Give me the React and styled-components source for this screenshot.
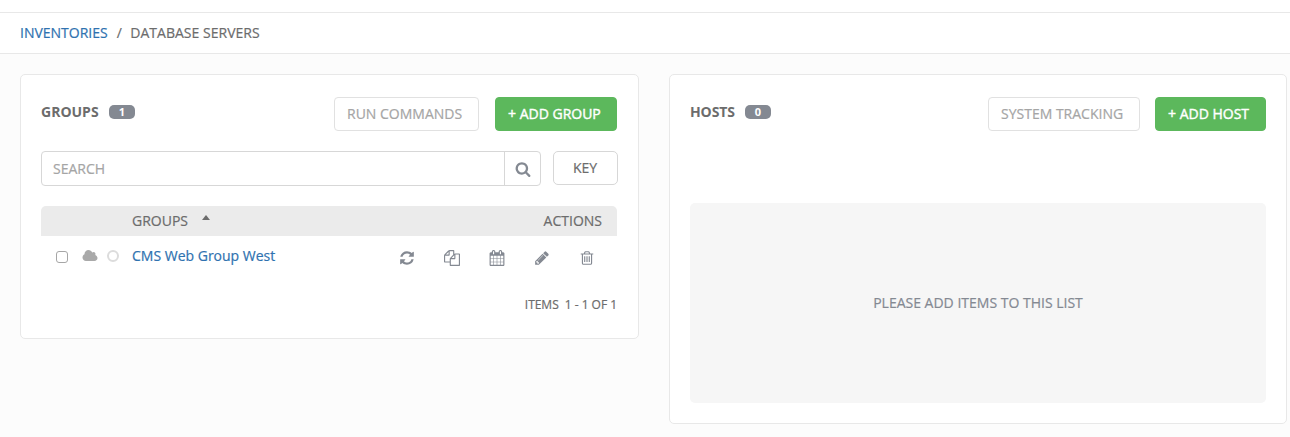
import React from "react";
import styled, { createGlobalStyle } from "styled-components";

const GlobalStyle = createGlobalStyle`
  *, *::before, *::after { box-sizing: border-box; }
  body {
    margin: 0;
    background: #fcfcfc;
    color: #6c6c6c;
    font: 14px/20px "Open Sans", sans-serif;
    -webkit-text-stroke: 0.2px currentColor;
    overflow: hidden;
  }
`;

const TopStrip = styled.div`
  height: 12px;
  background: #fff;
`;

const Breadcrumb = styled.nav`
  display: flex;
  align-items: center;
  height: 42px;
  padding: 0 20px 1px;
  background: #fff;
  border-top: 1px solid #e8e8e8;
  border-bottom: 1px solid #e8e8e8;
`;

const Current = styled.span`
  letter-spacing: 0.02px;
`;

const Link = styled.a`
  color: #2f72b0;
  text-decoration: none;
`;

const Separator = styled.span`
  width: 22.5px;
  padding-left: 9px;
`;

const Panels = styled.main`
  display: grid;
  grid-template-columns: 619px 618px;
  align-items: start;
  gap: 30px;
  padding: 20px;
`;

const Panel = styled.section`
  height: ${(p) => p.$height}px;
  padding: 22px ${(p) => p.$right || 20}px 20px 20px;
  background: #fff;
  border: 1px solid #e8e8e8;
  border-radius: 5px;
`;

const PanelHeader = styled.header`
  display: flex;
  height: 34px;
  margin-bottom: ${(p) => p.$gap}px;
`;

const Title = styled.h2`
  margin: 5px 0 0;
  font-size: 14px;
  line-height: 20px;
  font-weight: 700;
  width: ${(p) => p.$width}px;
  letter-spacing: ${(p) => p.$tracking}px;
  white-space: nowrap;
  -webkit-text-stroke: 0;
`;

const Badge = styled.span`
  width: 26px;
  height: 14px;
  margin-top: 8px;
  border-radius: 5px;
  background: #848992;
  color: #fff;
  font-size: 11px;
  line-height: 14px;
  font-weight: 700;
  text-align: center;
  -webkit-text-stroke: 0;
`;

const HeaderButtons = styled.div`
  display: flex;
  gap: ${(p) => p.$gap}px;
  margin-left: auto;
`;

const Button = styled.button`
  width: ${(p) => p.$width}px;
  height: 34px;
  padding: 0 0 0 12px;
  border: 1px solid #e1e1e1;
  border-radius: 4px;
  background: #fff;
  color: #a5a5a5;
  font: 14px/20px "Open Sans", sans-serif;
  text-align: left;
  white-space: nowrap;
  -webkit-text-stroke: 0.2px currentColor;
`;

const AddButton = styled(Button)`
  border-color: #5cb85c;
  background: #5cb85c;
  color: #fff;
  -webkit-text-stroke: 0.4px #fff;
`;

const KeyButton = styled(Button)`
  padding-left: 19px;
  border-color: #d7d7d7;
  border-radius: 5px;
  color: #6c6c6c;
`;

const SearchRow = styled.div`
  display: flex;
  gap: 12px;
  width: 577px;
  margin-bottom: 20px;
`;

const SearchBox = styled.div`
  display: flex;
  width: 500px;
  height: 35px;
  border: 1px solid #d7d7d7;
  border-radius: 4px;
`;

const SearchInput = styled.input`
  flex: 1;
  min-width: 0;
  padding: 0 11px;
  border: 0;
  background: transparent;
  font: 14px "Open Sans", sans-serif;
  &::placeholder {
    color: #a5a5a5;
    opacity: 1;
  }
`;

const SearchButton = styled.span`
  display: flex;
  align-items: center;
  justify-content: center;
  width: 36px;
  border-left: 1px solid #d7d7d7;
  color: #848992;
`;

const ListHeader = styled.div`
  display: flex;
  height: 30px;
  padding: 5px 15px 0 91px;
  background: #ebebeb;
  border-radius: 5px 5px 0 0;
`;

const SortArrow = styled.span`
  width: 0;
  height: 0;
  margin: 4px auto 0 13.5px;
  border: solid transparent;
  border-width: 0 4.5px 5px;
  border-bottom-color: #6c6c6c;
`;

const Row = styled.div`
  display: flex;
  align-items: flex-start;
  height: 59px;
`;

const Check = styled.input`
  appearance: none;
  width: 12px;
  height: 12px;
  margin: 15px 14px 0 15px;
  border: 1px solid #a6a6a6;
  border-radius: 3px;
  background: #fff;
`;

const CloudSlot = styled.span`
  display: flex;
  width: 24px;
  padding-top: 13px;
  color: #a9a9a9;
`;

const StatusRing = styled.span`
  width: 12px;
  height: 12px;
  margin: 14px 13px 0 1px;
  border: 2px solid #dcdcdc;
  border-radius: 50%;
`;

const GroupName = styled(Link)`
  padding-top: 10px;
`;

const Actions = styled.div`
  display: flex;
  gap: 29px;
  margin: 14px 22px 0 auto;
  color: #848992;
`;

const Glyph = styled.svg`
  display: block;
  height: ${(p) => p.$size}px;
  fill: currentColor;
`;

const Pagination = styled.div`
  font-size: 12px;
  line-height: 20px;
  text-align: right;
  letter-spacing: -0.03px;
  white-space: pre;
`;

const EmptyList = styled.div`
  display: flex;
  align-items: center;
  justify-content: center;
  height: 200px;
  border-radius: 5px;
  background: #f6f6f6;
  color: #848992;
`;

const paths = {
  search:
    "M1216 832q0-185-131.5-316.5t-316.5-131.5-316.5 131.5-131.5 316.5 131.5 316.5 316.5 131.5 316.5-131.5 131.5-316.5zm512 832q0 52-38 90t-90 38q-54 0-90-38l-343-342q-179 124-399 124-143 0-273.5-55.5t-225-150-150-225-55.5-273.5 55.5-273.5 150-225 225-150 273.5-55.5 273.5 55.5 225 150 150 225 55.5 273.5q0 220-124 399l343 343q37 37 37 90z",
  cloud:
    "M1984 1152q0 159-112.5 271.5t-271.5 112.5h-1088q-185 0-316.5-131.5t-131.5-316.5q0-132 71-241.5t187-163.5q-2-28-2-43 0-212 150-362t362-150q158 0 286.5 88t187.5 230q70-62 166-62 106 0 181 75t75 181q0 75-41 138 129 30 213 134.5t84 239.5z",
  refresh:
    "M1639 1056q0 5-1 7-64 268-268 434.5t-478 166.5q-146 0-282.5-55t-243.5-157l-129 129q-19 19-45 19t-45-19-19-45v-448q0-26 19-45t45-19h448q26 0 45 19t19 45-19 45l-137 137q71 66 161 102t187 36q134 0 250-65t186-179q11-17 53-117 8-23 30-23h192q13 0 22.5 9.5t9.5 22.5zm25-800v448q0 26-19 45t-45 19h-448q-26 0-45-19t-19-45 19-45l138-138q-148-137-349-137-134 0-250 65t-186 179q-11 17-53 117-8 23-30 23h-199q-13 0-22.5-9.5t-9.5-22.5v-7q65-268 270-434.5t480-166.5q146 0 284 55.5t245 156.5l130-129q19-19 45-19t45 19 19 45z",
  copy:
    "M1696 384q40 0 68 28t28 68v1216q0 40-28 68t-68 28h-960q-40 0-68-28t-28-68v-288h-544q-40 0-68-28t-28-68v-672q0-40 20-88t48-76l408-408q28-28 76-48t88-20h416q40 0 68 28t28 68v328q68-40 128-40h416zm-544 213l-299 299h299v-299zm-640-384l-299 299h299v-299zm196 647l316-316v-416h-384v416q0 40-28 68t-68 28h-416v640h512v-256q0-40 20-88t48-76zm956 804v-1152h-384v416q0 40-28 68t-68 28h-416v640h896z",
  calendar:
    "M192 1664h288v-288h-288v288zm352 0h320v-288h-320v288zm-352-352h288v-320h-288v320zm352 0h320v-320h-320v320zm-352-384h288v-288h-288v288zm736 736h320v-288h-320v288zm-384-736h320v-288h-320v288zm768 736h288v-288h-288v288zm-384-352h320v-320h-320v320zm-352-864v-288q0-13-9.5-22.5t-22.5-9.5h-64q-13 0-22.5 9.5t-9.5 22.5v288q0 13 9.5 22.5t22.5 9.5h64q13 0 22.5-9.5t9.5-22.5zm736 864h288v-320h-288v320zm-384-384h320v-288h-320v288zm384 0h288v-288h-288v288zm32-480v-288q0-13-9.5-22.5t-22.5-9.5h-64q-13 0-22.5 9.5t-9.5 22.5v288q0 13 9.5 22.5t22.5 9.5h64q13 0 22.5-9.5t9.5-22.5zm384-64v1280q0 52-38 90t-90 38h-1408q-52 0-90-38t-38-90v-1280q0-52 38-90t90-38h128v-96q0-66 47-113t113-47h64q66 0 113 47t47 113v96h384v-96q0-66 47-113t113-47h64q66 0 113 47t47 113v96h128q52 0 90 38t38 90z",
  pencil:
    "M491 1536l91-91-235-235-91 91v107h128v128h107zm523-928q0-22-22-22-10 0-17 7l-542 542q-7 7-7 17 0 22 22 22 10 0 17-7l542-542q7-7 7-17zm-54-192l416 416-832 832h-416v-416zm683 96q0 53-37 90l-166 166-416-416 166-165q36-38 90-38 53 0 91 38l235 234q37 39 37 91z",
  trash:
    "M704 736v576q0 14-9 23t-23 9h-64q-14 0-23-9t-9-23v-576q0-14 9-23t23-9h64q14 0 23 9t9 23zm256 0v576q0 14-9 23t-23 9h-64q-14 0-23-9t-9-23v-576q0-14 9-23t23-9h64q14 0 23 9t9 23zm256 0v576q0 14-9 23t-23 9h-64q-14 0-23-9t-9-23v-576q0-14 9-23t23-9h64q14 0 23 9t9 23zm128 724v-948h-896v948q0 22 7 40.5t14.5 27 10.5 8.5h832q3 0 10.5-8.5t14.5-27 7-40.5zm-672-1076h448l-48-117q-7-9-17-11h-317q-10 2-17 11zm928 32v64q0 14-9 23t-23 9h-96v948q0 83-47 143.5t-113 60.5h-832q-66 0-113-58.5t-47-141.5v-952h-96q-14 0-23-9t-9-23v-64q0-14 9-23t23-9h309l70-167q15-37 54-63t79-26h320q40 0 79 26t54 63l70 167h309q14 0 23 9t9 23z",
};

function Icon({ name, width = 1792, size = 16 }) {
  return (
    <Glyph viewBox={`0 0 ${width} 1792`} $size={size} aria-hidden="true">
      <path d={paths[name]} />
    </Glyph>
  );
}

export default function App() {
  return (
    <>
      <GlobalStyle />
      <TopStrip />
      <Breadcrumb>
        <Link>INVENTORIES</Link>
        <Separator>/</Separator>
        <Current>DATABASE SERVERS</Current>
      </Breadcrumb>
      <Panels>
        <Panel $height={265} $right={21}>
          <PanelHeader $gap={20}>
            <Title $width={68} $tracking={0}>GROUPS</Title>
            <Badge>1</Badge>
            <HeaderButtons $gap={16}>
              <Button $width={145}>RUN COMMANDS</Button>
              <AddButton $width={122}>+ ADD GROUP</AddButton>
            </HeaderButtons>
          </PanelHeader>
          <SearchRow>
            <SearchBox>
              <SearchInput placeholder="SEARCH" />
              <SearchButton><Icon name="search" /></SearchButton>
            </SearchBox>
            <KeyButton $width={65}>KEY</KeyButton>
          </SearchRow>
          <ListHeader>
            <span>GROUPS</span>
            <SortArrow />
            <span>ACTIONS</span>
          </ListHeader>
          <Row>
            <Check type="checkbox" />
            <CloudSlot><Icon name="cloud" width={2048} size={14} /></CloudSlot>
            <StatusRing />
            <GroupName>CMS Web Group West</GroupName>
            <Actions>
              <Icon name="refresh" />
              <Icon name="copy" />
              <Icon name="calendar" />
              <Icon name="pencil" />
              <Icon name="trash" />
            </Actions>
          </Row>
          <Pagination>{"ITEMS  1 - 1 OF 1"}</Pagination>
        </Panel>
        <Panel $height={350}>
          <PanelHeader $gap={72}>
            <Title $width={55} $tracking={-0.1}>HOSTS</Title>
            <Badge>0</Badge>
            <HeaderButtons $gap={15}>
              <Button $width={152}>SYSTEM TRACKING</Button>
              <AddButton $width={111}>+ ADD HOST</AddButton>
            </HeaderButtons>
          </PanelHeader>
          <EmptyList>PLEASE ADD ITEMS TO THIS LIST</EmptyList>
        </Panel>
      </Panels>
    </>
  );
}
